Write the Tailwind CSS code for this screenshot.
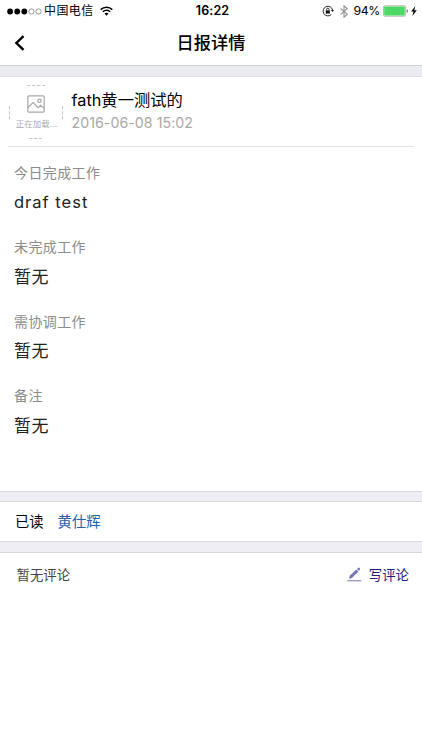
<!DOCTYPE html>
<html lang="zh-CN">
  <head>
    <meta charset="UTF-8" />
    <meta name="viewport" content="width=device-width, initial-scale=1.0" />
    <title>日报详情</title>
    <script src="https://cdn.jsdelivr.net/npm/@tailwindcss/browser@4"></script>
  </head>
  <body class="bg-white h-[750px] flex flex-col overflow-hidden font-['Inter','Noto_Sans_CJK_SC',sans-serif] text-black whitespace-nowrap">
    <!-- Status bar -->
    <div class="h-[22px] shrink-0 grid grid-cols-[1fr_auto_1fr] items-center pl-[7px] pr-[5px] text-[12px] leading-[22px]">
      <div class="flex items-center">
        <svg class="w-[35px] h-[7px]" viewBox="0 0 35 7">
          <circle cx="3.1" cy="3.5" r="2.9" />
          <circle cx="10.2" cy="3.5" r="2.9" />
          <circle cx="17.3" cy="3.5" r="2.9" />
          <circle cx="24.4" cy="3.5" r="2.6" fill="none" stroke="#555" stroke-width=".6" />
          <circle cx="31.5" cy="3.5" r="2.6" fill="none" stroke="#555" stroke-width=".6" />
        </svg>
        <span class="ml-[2px] tracking-[0.4px]">中国电信</span>
        <svg class="ml-[6px] w-[13px] h-[10px]" viewBox="0 0 13 10" fill="none" stroke="#000" stroke-width="1.5">
          <path d="M.7 3.6a8.3 8.3 0 0 1 11.6 0" />
          <path d="M2.8 5.8a5.3 5.3 0 0 1 7.4 0" />
          <path d="M4.5 7.6a2.9 2.9 0 0 1 4 0L6.5 9.7z" fill="#000" stroke="none" />
        </svg>
      </div>
      <span class="pl-px font-semibold text-[12.5px] tracking-[0.1px]">16:22</span>
      <div class="flex items-center justify-end">
        <svg class="w-[12px] h-[12px]" viewBox="0 0 12 12" fill="none" stroke="#111" stroke-width=".9">
          <path d="M9.2 9.6A4.8 4.8 0 1 1 10.6 5" />
          <path d="M9 5h3l-1.5 2z" fill="#111" stroke="none" />
          <path d="M3.8 5.4h4v3.2h-4z" fill="#111" stroke="none" />
          <path d="M4.6 5.5V4.4a1.2 1.2 0 0 1 2.4 0v1.1" />
        </svg>
        <svg class="ml-[6px] w-[8px] h-[13px]" viewBox="0 0 8 13" fill="none" stroke="#999" stroke-width="1.2">
          <path d="M.6 3.5 7.2 9.3 4 12.2V.8l3.2 2.9L.6 9.5" />
        </svg>
        <span class="ml-[6px] text-[12.3px] tracking-[-0.4px]">94%</span>
        <svg class="ml-[3px] w-[26px] h-[12px]" viewBox="0 0 26 12">
          <rect x=".5" y=".8" width="22.2" height="10.4" rx="1.4" fill="#fff" stroke="#999" stroke-width=".7" />
          <rect x="1.2" y="1.5" width="20.6" height="9" rx=".7" fill="#4cd964" />
          <path d="M23.7 4.2c1.7.3 1.7 3.3 0 3.6z" fill="#777" />
        </svg>
        <svg class="ml-[2px] w-[6px] h-[10px]" viewBox="0 0 6 10">
          <path d="M4.3 0 .2 5.6h2.3L1.4 10l4.4-5.8H3.3z" />
        </svg>
      </div>
    </div>

    <!-- Nav bar -->
    <header class="h-[43px] shrink-0 grid grid-cols-[1fr_auto_1fr] items-center px-[14px] pb-px">
      <svg class="w-[11px] h-[16px]" viewBox="0 0 11 16" fill="none" stroke="#000" stroke-width="2.4">
        <path d="M9.5 1.2 2.4 8l7.1 6.8" />
      </svg>
      <h1 class="text-[17.2px] font-medium">日报详情</h1>
    </header>
    <div class="h-[12px] shrink-0 bg-[#ebebf2] border-t border-b border-t-[#d2d2d5] border-b-[#dddde2]"></div>

    <!-- Report -->
    <section class="h-[414px] shrink-0">
      <div class="ml-[8px] mr-[8px] h-[70px] flex border-b border-[#e4e4e4]">
        <div class="relative mt-[7px] w-[55px] h-[55px] flex flex-col items-center">
          <svg class="absolute inset-0 w-[55px] h-[55px]" viewBox="0 0 55 55" fill="none" stroke="#c8c8c8" stroke-width="1" stroke-dasharray="3.5 1.5">
            <path d="M19 1.5h18M21 54.5h13M1.5 22v14M54.5 22v14" />
          </svg>
          <svg class="mt-[11px] w-[18px] h-[18px]" viewBox="0 0 18 18" fill="none" stroke="#a8a8ac" stroke-width="1.2">
            <rect x=".8" y=".8" width="16.4" height="16.4" rx="1.2" />
            <circle cx="12.5" cy="5.8" r="1.7" />
            <path d="m1 12.5 5-5 5 5.2 2.6-2.3 3.4 3" />
          </svg>
          <span class="mt-[5px] ml-[2px] text-[8.5px] leading-[12px] text-[#aaa]">正在加载...</span>
        </div>
        <div class="ml-[8.5px] pt-[11px]">
          <div class="text-[16.3px] leading-[24px]">fath黄一测试的</div>
          <div class="text-[14.2px] leading-[22px] tracking-[0.05px] text-[#a8a8a8]">2016-06-08 15:02</div>
        </div>
      </div>
      <dl class="pl-[14px] pt-[15px]">
        <dt class="h-[22px] text-[14px] leading-[22px] tracking-[0.4px] text-[#8c8c8c]">今日完成工作</dt>
        <dd class="h-[52.4px] pt-[5px] text-[16.5px] leading-[26px] tracking-[1px] text-[#222]">draf test</dd>
        <dt class="h-[22px] text-[14px] leading-[22px] tracking-[0.4px] text-[#8c8c8c]">未完成工作</dt>
        <dd class="h-[52.2px] pt-[6px] text-[17px] leading-[26px] tracking-[0.4px] text-[#222]">暂无</dd>
        <dt class="h-[22px] text-[14px] leading-[22px] tracking-[0.4px] text-[#8c8c8c]">需协调工作</dt>
        <dd class="h-[52.4px] pt-[5.5px] text-[17px] leading-[26px] tracking-[0.4px] text-[#222]">暂无</dd>
        <dt class="h-[22px] text-[14px] leading-[22px] tracking-[0.4px] text-[#8c8c8c]">备注</dt>
        <dd class="h-[52.4px] pt-[6px] text-[17px] leading-[26px] tracking-[0.4px] text-[#222]">暂无</dd>
      </dl>
    </section>
    <div class="h-[11px] shrink-0 bg-[#eeeef4] border-t border-b border-[#d8d8dd]"></div>

    <!-- Readers -->
    <section class="h-[39px] shrink-0 flex items-center pl-[15px] text-[14.3px]">
      <span>已读</span>
      <span class="ml-[14px] text-[#2060a4]">黄仕辉</span>
    </section>
    <div class="h-[12px] shrink-0 bg-[#eeeef4] border-t border-b border-[#d8d8dd]"></div>

    <!-- Comments -->
    <section class="h-[44px] shrink-0 flex items-center justify-between pl-[16.5px] pr-[13px] text-[13.4px]">
      <span class="text-[#444]">暂无评论</span>
      <button class="flex items-center text-[#20207c]">
        <svg class="w-[15px] h-[15px] mr-[7px]" viewBox="0 0 15 15" fill="#7474ae">
          <path d="m2 11.8.8-3L9.4 2.5l2 2L4.9 11z" />
          <path d="m10 1.9 1.2-1.2c.7-.5 2.3 1 1.7 1.8l-1 1.3z" />
          <path d="M.3 13.3h14v1H.3z" />
        </svg>
        写评论
      </button>
    </section>
  </body>
</html>
